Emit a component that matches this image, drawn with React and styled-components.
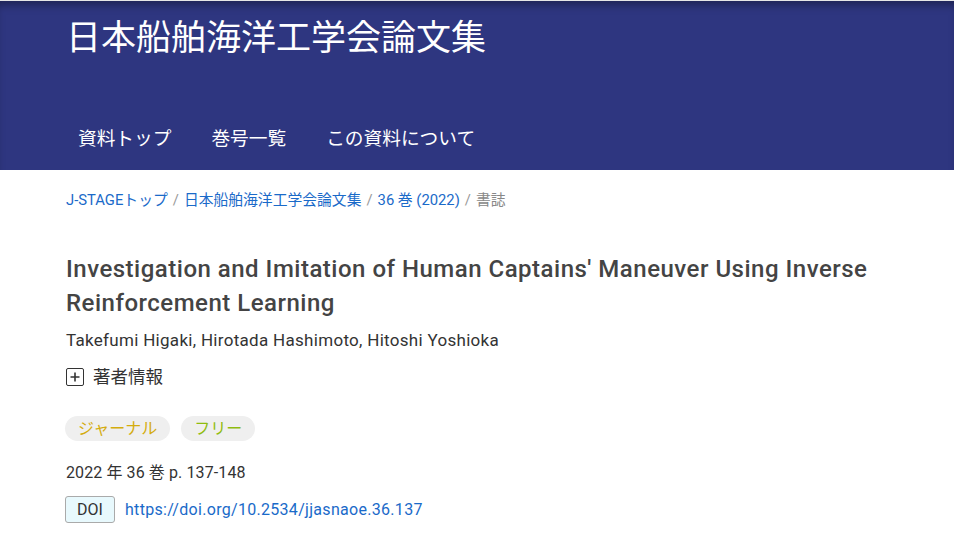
import React from 'react'
import styled, { createGlobalStyle } from 'styled-components'

const GlobalStyle = createGlobalStyle`
  html, body {
    margin: 0;
    padding: 0;
    background: #fff;
    font-family: Roboto, "Noto Sans CJK JP", "Noto Sans", sans-serif;
  }
  a { text-decoration: none; }
`

const crumbs = [
  { label: 'J-STAGEトップ', link: true },
  { label: '日本船舶海洋工学会論文集', link: true },
  { label: '36 巻 (2022)', link: true },
  { label: '書誌', link: false },
]

const App = () => {
  return (
    <Page>
      <GlobalStyle />
      <Header>
        <SiteTitle>日本船舶海洋工学会論文集</SiteTitle>
        <Nav>
          <NavLink href="#">資料トップ</NavLink>
          <NavLink href="#">巻号一覧</NavLink>
          <NavLink href="#">この資料について</NavLink>
        </Nav>
      </Header>
      <Main>
        <Breadcrumb>
          {crumbs.map((c, i) => (
            <React.Fragment key={c.label}>
              {i > 0 && <Sep>/</Sep>}
              {c.link ? <CrumbLink href="#">{c.label}</CrumbLink> : <Current>{c.label}</Current>}
            </React.Fragment>
          ))}
        </Breadcrumb>
        <ArticleTitle>
          Investigation and Imitation of Human Captains&#8242; Maneuver Using Inverse Reinforcement Learning
        </ArticleTitle>
        <Authors>Takefumi Higaki, Hirotada Hashimoto, Hitoshi Yoshioka</Authors>
        <Toggle>
          <PlusBox>
            <svg width="12" height="12" viewBox="0 0 12 12">
              <path d="M6 1.5v9M1.5 6h9" stroke="#333" strokeWidth="1.6" />
            </svg>
          </PlusBox>
          著者情報
        </Toggle>
        <Tags>
          <Tag color="#d4ac0d">ジャーナル</Tag>
          <Tag color="#8fbc0f">フリー</Tag>
        </Tags>
        <Volume>2022 年 36 巻 p. 137-148</Volume>
        <DoiRow>
          <DoiLabel>DOI</DoiLabel>
          <DoiLink href="#">https://doi.org/10.2534/jjasnaoe.36.137</DoiLink>
        </DoiRow>
      </Main>
    </Page>
  )
}

const Page = styled.div`
  min-height: 542px;
  border-top: 1px solid #e6e6e6;
`

const Header = styled.header`
  background-color: #2e3680;
  box-shadow: inset 0 8px 8px -4px rgba(0, 0, 0, 0.35);
  height: 169px;
  padding-left: 66px;
  box-sizing: border-box;
  display: flex;
  flex-direction: column;
`

const SiteTitle = styled.h1`
  margin: 0;
  padding-top: 16px;
  color: #fff;
  font-size: 35px;
  font-weight: 400;
  line-height: 44px;
`

const Nav = styled.nav`
  display: flex;
  gap: 40px;
  margin-top: 65px;
  padding-left: 12px;
`

const NavLink = styled.a`
  color: #fff;
  font-size: 18.7px;
  line-height: 26px;
`

const Main = styled.main`
  padding: 18px 65px 0;
`

const Breadcrumb = styled.div`
  display: flex;
  align-items: center;
  padding-left: 1px;
  font-size: 14.8px;
  line-height: 24px;
`

const CrumbLink = styled.a`
  color: #1a6ac9;
`

const Current = styled.span`
  color: #888;
`

const Sep = styled.span`
  color: #999;
  margin: 0 5px;
`

const ArticleTitle = styled.h2`
  margin: 40px 0 0 1px;
  font-size: 24px;
  font-weight: 500;
  line-height: 34px;
  letter-spacing: 0.5px;
  color: #444;
  max-width: 830px;
`

const Authors = styled.div`
  margin: 8px 0 0 1px;
  font-size: 17px;
  line-height: 24px;
  letter-spacing: 0.3px;
  color: #333;
`

const Toggle = styled.div`
  display: flex;
  align-items: center;
  gap: 9px;
  margin: 13px 0 0 1px;
  font-size: 17.5px;
  line-height: 24px;
  color: #333;
`

const PlusBox = styled.span`
  width: 18px;
  height: 18px;
  box-sizing: border-box;
  border: 1.5px solid #333;
  border-radius: 2px;
  display: flex;
  align-items: center;
  justify-content: center;
`

const Tags = styled.div`
  display: flex;
  gap: 11px;
  margin-top: 27px;
`

const Tag = styled.span`
  background: #efefef;
  color: ${p => p.color};
  font-size: 16px;
  line-height: 25px;
  padding: 0 13px;
  border-radius: 13px;
`

const Volume = styled.div`
  margin: 20px 0 0 1px;
  font-size: 16px;
  line-height: 24px;
  letter-spacing: 0.1px;
  color: #333;
`

const DoiRow = styled.div`
  display: flex;
  align-items: center;
  gap: 10px;
  margin-top: 11px;
`

const DoiLabel = styled.span`
  box-sizing: border-box;
  width: 50px;
  height: 27px;
  display: flex;
  align-items: center;
  justify-content: center;
  background: #e8f9fd;
  border: 1px solid #aaa;
  border-radius: 3px;
  font-size: 16px;
  color: #333;
`

const DoiLink = styled.a`
  color: #1a6ac9;
  font-size: 16px;
  letter-spacing: 0.3px;
`

export default App
